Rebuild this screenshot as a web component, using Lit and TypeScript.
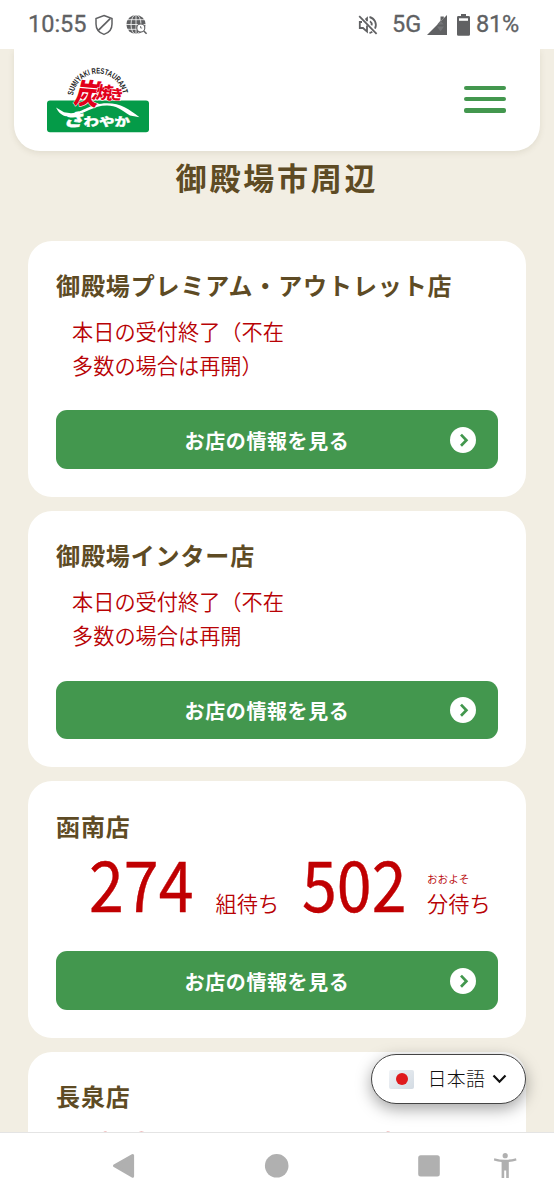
import { LitElement, html, css, nothing } from "lit";
import { customElement, property } from "lit/decorators.js";

interface Shop {
  name: string;
  notice?: string[];
  groups?: string;
  minutes?: string;
}

const SHOPS: Shop[] = [
  { name: "御殿場プレミアム・アウトレット店", notice: ["本日の受付終了（不在", "多数の場合は再開）"] },
  { name: "御殿場インター店", notice: ["本日の受付終了（不在", "多数の場合は再開"] },
  { name: "函南店", groups: "274", minutes: "502" },
  { name: "長泉店", groups: "287", minutes: "552" },
];

@customElement("status-bar")
class StatusBar extends LitElement {
  static styles = css`
    :host {
      display: flex;
      align-items: center;
      height: 49px;
      box-sizing: border-box;
      padding: 0 34px 0 28px;
      background: #fff;
      color: #606163;
      font: 400 23.5px/1 Roboto, sans-serif;
      flex: none;
    }
    .time { width: 66px; }
    .globe { margin-left: 12px; }
    .mute { margin-left: auto; }
    .net { margin-left: 14px; width: 35px; }
    .battery { margin-left: 10px; }
    .pct { margin-left: 6px; width: 44px; letter-spacing: -0.2px; }
    span { -webkit-text-stroke: 0.3px #606163; }
    svg { display: block; flex: none; }
  `;
  render() {
    return html`
      <span class="time">10:55</span>
      <svg width="20" height="22" viewBox="0 0 20 22" fill="none" stroke="#606163" stroke-width="1.5">
        <path d="M10 1.5 L18 4.5 V10 C18 15 15 18.8 10 20.4 C5 18.8 2 15 2 10 V4.5 Z" />
        <path d="M4.3 16.4 L16.2 4.6" stroke-width="1.7" />
      </svg>
      <svg class="globe" width="22" height="22" viewBox="0 0 22 22">
        <circle cx="10" cy="10.5" r="9.6" fill="#606163" />
        <g fill="none" stroke="#fff" stroke-width="0.8">
          <path d="M10 0.5 V20.5 M0 10.5 H20 M1.5 5.7 H18.5 M1.5 15.3 H18.5" />
          <ellipse cx="10" cy="10.5" rx="5" ry="9.8" />
        </g>
        <circle cx="14.8" cy="14" r="4" fill="#fff" stroke="#606163" stroke-width="1.1" />
        <path d="M14.6 12 V14 H16.2" fill="none" stroke="#606163" stroke-width=".8" />
        <path d="M17.8 17 L20.6 19.8" stroke="#606163" stroke-width="1.6" />
      </svg>
      <svg class="mute" width="20" height="20" viewBox="0 0 20 20" fill="none" stroke="#606163" stroke-width="1.8">
        <path d="M1.2 1.2 L18.6 18.8" />
        <path d="M4 7 H1.8 V13 H5 L9 16.6 V10.5 M9 6.2 V3.2 L7.4 4.6" />
        <path d="M12 6.3 A4.2 4.2 0 0 1 13.7 10.3" />
        <path d="M11.5 2 A8.2 8.2 0 0 1 17 13.6 M11.5 18 A8 8 0 0 0 14.3 16.8" />
      </svg>
      <span class="net">5G</span>
      <svg width="20" height="20" viewBox="0 0 20 20">
        <path d="M0 20 L20 0 V20 Z" fill="#606163" />
        <path d="M13.5 1.5 V6.5 L16.8 3.2 V1.5 Z" fill="#606163" />
        <path d="M13.5 5.5 L16.8 9.5 H10.2 Z M10 11.5 H17 L13.5 16.5 Z" fill="#737477" />
      </svg>
      <svg class="battery" width="13" height="22" viewBox="0 0 13 22">
        <path d="M4 0 H9 V2 H11.6 A1.4 1.4 0 0 1 13 3.4 V20.4 A1.4 1.4 0 0 1 11.6 21.8 H1.4 A1.4 1.4 0 0 1 0 20.4 V3.4 A1.4 1.4 0 0 1 1.4 2 H4 Z" fill="#606163" />
        <path d="M2 4.3 H11 V6.8 H2 Z" fill="#fff" />
      </svg>
      <span class="pct">81%</span>
    `;
  }
}

@customElement("site-header")
class SiteHeader extends LitElement {
  static styles = css`
    :host {
      display: flex;
      justify-content: space-between;
      align-items: center;
      height: 101.5px;
      margin: 0 14px;
      padding: 0 34px 0 33px;
      box-sizing: border-box;
      background: #fff;
      border-radius: 0 0 26px 26px;
      box-shadow: 0 2px 6px rgba(80, 65, 30, 0.1);
    }
    .logo { display: block; overflow: visible; }
    .menu { display: flex; flex-direction: column; gap: 7.2px; width: 42px; margin-top: -1px; }
    .bar { height: 4.1px; border-radius: 2px; background: #43974e; }
    .arc { font: 700 8.2px "Liberation Sans Narrow", "Liberation Sans", sans-serif; }
    .jp { font-family: "Noto Sans CJK JP", sans-serif; font-weight: 900; }
  `;
  render() {
    return html`
      <svg class="logo" width="102" height="66" viewBox="47 67 102 66">
        <defs><path id="arc" d="M73.2 95.4 A25 25 0 0 1 122.8 95.4" /></defs>
        <rect x="47" y="100.5" width="102" height="31.8" rx="3" fill="#049b48" />
        <text class="arc" fill="#222">
          <textPath href="#arc" textLength="70" lengthAdjust="spacingAndGlyphs">SUMIYAKI RESTAURANT</textPath>
        </text>
        <path d="M56 107.5 L64 112.3 L71 113.2 C84 112 90 103.2 107 103.2 C121 103.2 129 109 139.5 117.3 L130 115.6 C121 109.5 116 105.4 107 105.4 C93 105.4 86 113.6 73 115.6 L66 116.3 C60 115 58 111 56 107.5 Z" fill="#fff" />
        <g class="jp" fill="#e2001a" stroke="#fff" stroke-width="1" paint-order="stroke">
          <text font-size="27" transform="translate(73 103) rotate(5) skewX(-10) scale(.92 1.07)">炭</text>
          <text font-size="17" transform="translate(95.5 98.2) rotate(4) skewX(-6)">焼</text>
          <text font-size="14" transform="translate(109.6 99) rotate(4)">き</text>
        </g>
        <g class="jp" fill="#fff" stroke="#fff" stroke-width=".4">
          <text font-size="20" transform="translate(63 126) skewX(-10) scale(1.05 .86)">さ</text>
          <text font-size="15.5" transform="translate(83.5 125.8) scale(1 .76)">わやか</text>
        </g>
      </svg>
      <div class="menu"><div class="bar"></div><div class="bar"></div><div class="bar"></div></div>
    `;
  }
}

@customElement("shop-card")
class ShopCard extends LitElement {
  @property({ attribute: false }) shop!: Shop;
  static styles = css`
    :host {
      display: flex;
      flex-direction: column;
      height: 256.4px;
      flex: none;
      box-sizing: border-box;
      padding: 26.2px 28px 28px;
      background: #fff;
      border-radius: 24px;
      font-family: "Noto Sans CJK JP", sans-serif;
    }
    .name {
      margin: 0;
      color: #5e4b24;
      font-weight: 700;
      font-size: 24px;
      line-height: 36px;
      letter-spacing: 0.88px;
      white-space: nowrap;
    }
    .notice {
      margin: 11px 0 0 16px;
      color: #b80205;
      font-size: 21.2px;
      line-height: 34px;
      font-weight: 350;
    }
    .line { white-space: nowrap; }
    .wait { display: flex; align-items: flex-end; height: 68px; margin-top: 6.6px; color: #c00002; }
    .num {
      width: 104px;
      margin-left: 33px;
      font-size: 70.5px;
      line-height: 70px;
      height: 72px;
      white-space: nowrap;
      -webkit-text-stroke: 0.4px #c00002;
    }
    .digits { display: inline-block; transform: scaleX(0.89); transform-origin: 0 50%; }
    .num.second { margin-left: 22px; }
    .unit { width: 64px; margin-left: 22.5px; font-size: 21.2px; line-height: 30px; white-space: nowrap; font-weight: 350; color: #b80205; }
    .second + .unit { margin-left: 21.5px; }
    .about { display: block; font-size: 10.6px; line-height: 18px; }
    .button {
      display: flex;
      align-items: center;
      height: 58.5px;
      margin-top: auto;
      padding: 0 22px 0 20px;
      border-radius: 11px;
      background: #43974e;
      color: #fff;
      font-weight: 700;
      font-size: 20px;
      letter-spacing: 0.6px;
    }
    .label { flex: 1; text-align: center; padding: 2px 0 0 8px; line-height: 30px; }
  `;
  render() {
    const s = this.shop;
    return html`
      <h2 class="name">${s.name}</h2>
      ${s.notice
        ? html`<div class="notice">${s.notice.map((l) => html`<div class="line">${l}</div>`)}</div>`
        : nothing}
      ${s.groups
        ? html`<div class="wait">
            <div class="num"><span class="digits">${s.groups}</span></div>
            <div class="unit">組待ち</div>
            <div class="num second"><span class="digits">${s.minutes}</span></div>
            <div class="unit"><span class="about">おおよそ</span>分待ち</div>
          </div>`
        : nothing}
      <div class="button">
        <span class="label">お店の情報を見る</span>
        <svg width="26" height="26" viewBox="0 0 26 26">
          <circle cx="13" cy="13" r="13" fill="#fff" />
          <path d="M11 7.6 L16.4 13.2 L11 18.8" fill="none" stroke="#43974e" stroke-width="2.7" />
        </svg>
      </div>
    `;
  }
}

@customElement("language-button")
class LanguageButton extends LitElement {
  static styles = css`
    :host {
      display: flex;
      align-items: center;
      box-sizing: border-box;
      width: 155px;
      height: 50px;
      padding: 0 18px 0 17px;
      border: 1px solid #444;
      border-radius: 25px;
      background: #fff;
      box-shadow: 0 5px 16px rgba(0, 0, 0, 0.36);
      color: #111;
      font: 300 19px/28px "Noto Sans CJK JP", sans-serif;
    }
    .flag {
      display: flex;
      align-items: center;
      justify-content: center;
      width: 25px;
      height: 19px;
      border-radius: 2px;
      background: linear-gradient(135deg, #f0f3f6, #d3dbe3);
    }
    .sun { width: 12px; height: 12px; border-radius: 50%; background: #df1a1d; }
    .lang { margin: -2px 0 0 13.5px; letter-spacing: 0.2px; flex: 1; white-space: nowrap; }
  `;
  render() {
    return html`
      <span class="flag"><span class="sun"></span></span>
      <span class="lang">日本語</span>
      <svg width="15" height="10" viewBox="0 0 15 10">
        <path d="M1.5 1.5 L7.5 7.7 L13.5 1.5" fill="none" stroke="#111" stroke-width="2.2" />
      </svg>
    `;
  }
}

@customElement("nav-bar")
class NavBar extends LitElement {
  static styles = css`
    :host { display: block; height: 68px; flex: none; box-sizing: border-box; border-top: 1px solid #e4e4e4; background: #fff; }
    svg { display: block; }
  `;
  render() {
    return html`
      <svg width="554" height="67" viewBox="0 1133 554 67" fill="#b0b0b0">
        <path d="M114.5 1165.8 L132.6 1155.5 V1176.2 Z" stroke="#b0b0b0" stroke-width="3" stroke-linejoin="round" />
        <circle cx="276.7" cy="1165.8" r="11.8" />
        <rect x="418.2" y="1155.3" width="21.6" height="21.3" rx="2.5" />
        <circle cx="505.2" cy="1155.7" r="2.6" />
        <path d="M494.3 1158.2 Q505.2 1161.2 516 1158.2 L516.5 1160.4 Q512.5 1161.5 508.8 1161.9 V1178 H506.2 V1170.5 H504.2 V1178 H501.6 V1161.9 Q498 1161.5 493.9 1160.4 Z" />
      </svg>
    `;
  }
}

@customElement("app-root")
class AppRoot extends LitElement {
  static styles = css`
    :host {
      display: flex;
      flex-direction: column;
      position: relative;
      width: 554px;
      height: 1200px;
      overflow: hidden;
      background: #f2eee3;
      font-family: "Noto Sans CJK JP", sans-serif;
    }
    .page { flex: 1; min-height: 0; overflow: hidden; }
    .area {
      margin: 2.5px 0 0;
      text-align: center;
      color: #5e4b24;
      font-weight: 700;
      font-size: 31px;
      line-height: 48px;
      letter-spacing: 2.8px;
    }
    .list { display: flex; flex-direction: column; gap: 14px; padding: 39.6px 28px 0; }
    .language { position: absolute; left: 371px; top: 1054px; }
  `;
  render() {
    return html`
      <status-bar></status-bar>
      <div class="page">
        <site-header></site-header>
        <h1 class="area">御殿場市周辺</h1>
        <div class="list">${SHOPS.map((s) => html`<shop-card .shop=${s}></shop-card>`)}</div>
      </div>
      <nav-bar></nav-bar>
      <language-button class="language"></language-button>
    `;
  }
}
